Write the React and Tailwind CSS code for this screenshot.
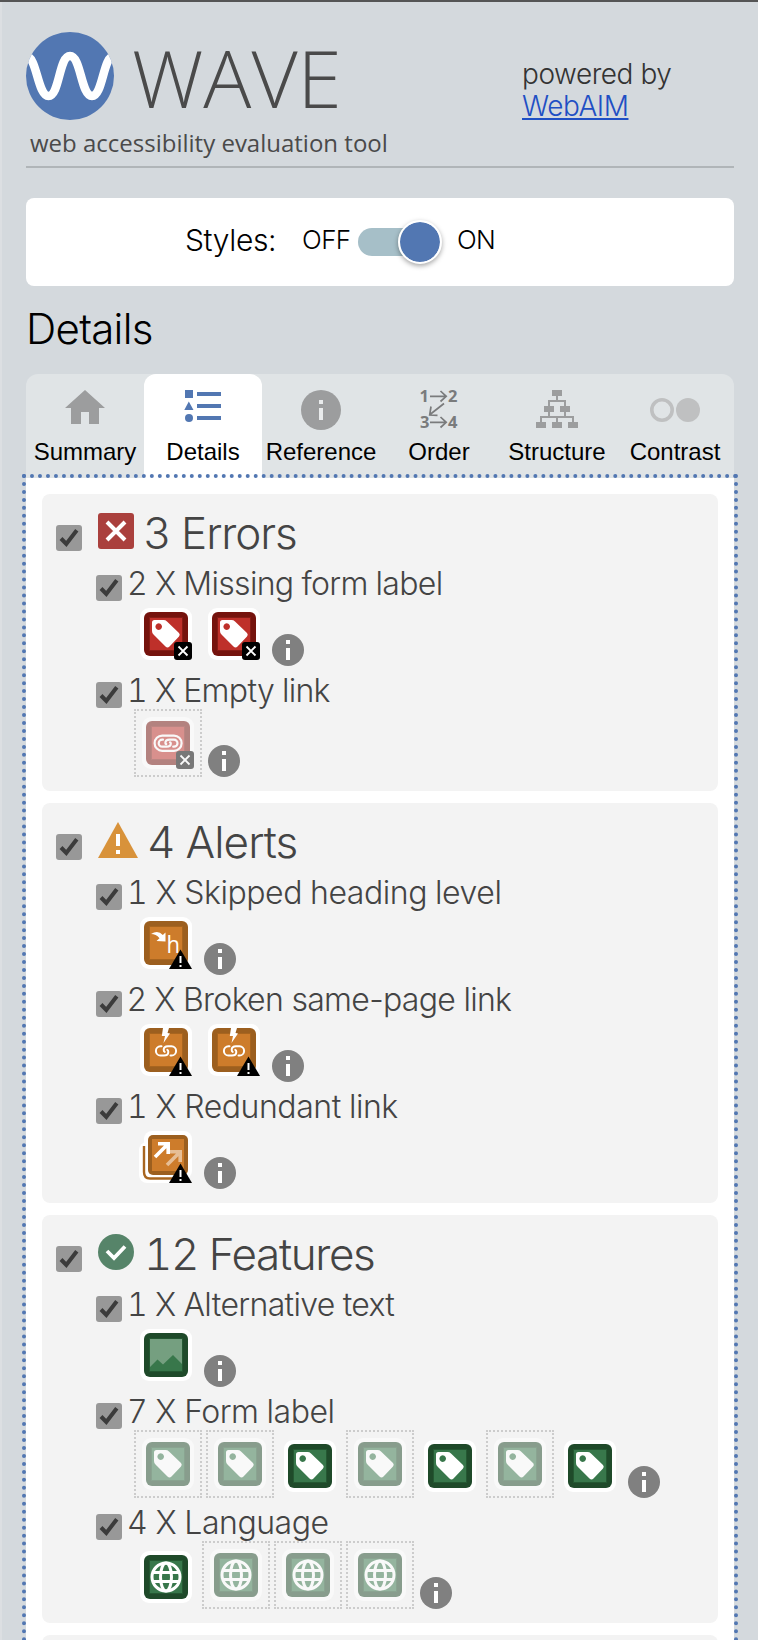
const light = "font-['Inter','Liberation_Sans',sans-serif] font-light";

function Logo() {
  return (
    <svg className="h-[88px] w-[88px] shrink-0" viewBox="0 0 88 88">
      <defs>
        <clipPath id="disc"><circle cx="44" cy="44" r="44" /></clipPath>
      </defs>
      <circle cx="44" cy="44" r="44" fill="#5277b2" />
      <path clipPath="url(#disc)" d="M0 24C11 24 11.500 64 22.500 64S33 24 44 24S55 64 66 64S77 24 88 24" fill="none" stroke="#fff" strokeWidth="8.500" />
    </svg>
  );
}

function HomeIcon() {
  return (
    <svg className="h-[40px] w-[40px]" viewBox="0 0 40 40" fill="#9c9d9e">
      <path d="M20 0L40 18H34V34H24V22H16V34H6V18H0Z" />
    </svg>
  );
}

function ListIcon() {
  return (
    <svg className="h-[40px] w-[40px]" viewBox="0 0 40 40" fill="#5277b2">
      <path d="M2 0h8v8h-8zM5.800 11.500L10.500 20H1.300zM14 2h24v4h-24zM14 14h24v4h-24zM14 26h24v4h-24z" />
      <circle cx="6" cy="28" r="4" />
    </svg>
  );
}

function RefIcon() {
  return (
    <svg className="h-[40px] w-[40px]" viewBox="0 0 40 40">
      <circle cx="20" cy="20" r="20" fill="#9c9d9e" />
      <path d="M18 10h4v4h-4zM18 18h4v12h-4z" fill="#e9ebec" />
    </svg>
  );
}

function OrderIcon() {
  return (
    <svg className="h-[40px] w-[40px] overflow-visible" viewBox="0 0 40 40">
      <g fill="#7a7b7c" fontFamily="Open Sans, sans-serif" fontWeight="700" fontSize="16.500">
        <text x="0.500" y="12">1</text>
        <text x="29" y="12">2</text>
        <text x="1" y="38">3</text>
        <text x="29" y="38">4</text>
      </g>
      <path d="M11 6.300H27M21.500 1L27.200 6.300L21.500 11.500M25 13.500L11 24.500M12 16.500L10.700 25L18.500 25.300M11 32.300H27M21.500 27L27.200 32.300L21.500 37.500" fill="none" stroke="#7a7b7c" strokeWidth="1.700" />
    </svg>
  );
}

function StructureIcon() {
  return (
    <svg className="h-[40px] w-[42px]" viewBox="0 0 42 40" fill="#9c9d9e">
      <path d="M16 0h10v6H16zM8 16h10v6H8zM24 16h10v6H24zM0 32h10v6H0zM16 32h10v6H16zM32 32h10v6H32z" />
      <path d="M21 6V11M13 16V11H29V16M13 22V27M29 22V27M5 32V27H37V32M21 27V32" fill="none" stroke="#9c9d9e" strokeWidth="2" />
    </svg>
  );
}

function ContrastIcon() {
  return (
    <svg className="h-[40px] w-[50px]" viewBox="0 0 50 40">
      <circle cx="12" cy="20" r="10.200" fill="none" stroke="#bfc0c1" strokeWidth="3.600" />
      <circle cx="38" cy="20" r="12" fill="#bfc0c1" />
    </svg>
  );
}

const tabs = [
  ['Summary', HomeIcon],
  ['Details', ListIcon],
  ['Reference', RefIcon],
  ['Order', OrderIcon],
  ['Structure', StructureIcon],
  ['Contrast', ContrastIcon],
];

function Checkbox({ className }) {
  return (
    <svg className={'h-[26px] w-[26px] shrink-0 ' + className} viewBox="0 0 26 26">
      <rect width="26" height="26" rx="3" fill="#989898" />
      <path d="M5 13.500L10.300 19L20.800 5.200" fill="none" stroke="#3b3b3b" strokeWidth="4" />
    </svg>
  );
}

function InfoIcon() {
  return (
    <svg className="ml-0.5 h-8 w-8 shrink-0" viewBox="0 0 32 32">
      <circle cx="16" cy="16" r="16" fill="#808080" />
      <path d="M14 6h4v4h-4zM14 14h4v12h-4z" fill="#fff" />
    </svg>
  );
}

const palettes = {
  red: ['#75130d', '#851c15', '#be302a'],
  orange: ['#9c5f1f', '#a8651f', '#cd7c2b'],
  green: ['#1f4a2a', '#245832', '#38774b'],
};

function Frame({ tone }) {
  const [edge, mid, fill] = palettes[tone];
  return (
    <g>
      <rect width="52" height="52" rx="9" fill="#fff" />
      <rect x="4" y="4" width="44" height="44" rx="6" fill={edge} />
      <rect x="9" y="9" width="34" height="34" fill={mid} />
      <rect x="10" y="10" width="32" height="32" fill={fill} />
    </g>
  );
}

function Tag() {
  return (
    <path fillRule="evenodd" fill="#fff" d="M14.500 12H23.500Q25.500 12 27 13.400L39 25Q40.500 26.500 39 28.500L29.500 38.500Q27.500 40.300 25.500 38.500L13.500 26.500Q12 25 12 23V14.500Q12 12 14.500 12ZM18.700 15.300A3.300 3.300 0 1 0 18.710 15.300Z" />
  );
}

function ErrorBadge() {
  return (
    <g>
      <rect x="34" y="34" width="18" height="18" rx="3" fill="#000" />
      <path d="M38.500 38.500L47.500 47.500M47.500 38.500L38.500 47.500" stroke="#fff" strokeWidth="1.800" />
    </g>
  );
}

function AlertBadge() {
  return (
    <g>
      <path d="M40.500 32.500L52 52H29Z" fill="#000" />
      <path d="M39.500 39h2v7h-2zM39.500 48h2v2h-2z" fill="#fff" />
    </g>
  );
}

function Glyph({ kind }) {
  switch (kind) {
    case 'missing':
      return <g><Frame tone="red" /><Tag /><ErrorBadge /></g>;
    case 'emptylink':
      return (
        <g>
          <Frame tone="red" />
          <g fill="none" stroke="#fff" strokeWidth="2.200" strokeLinecap="round">
            <rect x="12.600" y="18.600" width="27" height="15.200" rx="7.600" />
            <path d="M21 22.700H20.200A3.500 3.500 0 0 0 20.200 29.700H24.500Q28.800 29.700 28.800 26.500Q28.800 25.600 28 25.300" />
            <path transform="rotate(180 26.100 26.200)" d="M21 22.700H20.200A3.500 3.500 0 0 0 20.200 29.700H24.500Q28.800 29.700 28.800 26.500Q28.800 25.600 28 25.300" />
          </g>
          <ErrorBadge />
        </g>
      );
    case 'skipped':
      return (
        <g>
          <Frame tone="orange" />
          <path d="M11 17Q18 12.500 22.800 18L25.500 15.500L25.500 24.500L16.500 24L19.500 21.200Q16 17 11 17Z" fill="#fff" />
          <text x="26.500" y="35.500" fill="#fff" fontFamily="Open Sans, sans-serif" fontSize="24" textLength="13.500" lengthAdjust="spacingAndGlyphs">h</text>
          <AlertBadge />
        </g>
      );
    case 'broken':
      return (
        <g>
          <Frame tone="orange" />
          <path d="M23 4H29L27.500 9L30 9.500L23.500 19L25 12H21.800Z" fill="#fff" />
          <g fill="none" stroke="#fff" strokeWidth="2" strokeLinecap="round">
            <path d="M21.500 22.300H20.500A4.600 4.600 0 0 0 20.500 31.500H24Q28.300 31.500 28.300 28Q28.300 26.300 27.300 25.900" />
            <path transform="rotate(180 26 26.900)" d="M21.500 22.300H20.500A4.600 4.600 0 0 0 20.500 31.500H24Q28.300 31.500 28.300 28Q28.300 26.300 27.300 25.900" />
          </g>
          <AlertBadge />
        </g>
      );
    case 'redundant':
      return (
        <g>
          <rect x="4" y="0" width="48" height="48" rx="8" fill="#fff" />
          <rect x="-1" y="11" width="48" height="41" rx="8" fill="#fff" />
          <path d="M4 15V41Q4 47.500 10 47.500H38" fill="none" stroke="#a8651f" strokeWidth="2.400" />
          <rect x="8" y="4" width="40" height="40" rx="5" fill="#9c5f1f" />
          <rect x="12" y="8" width="32" height="32" fill="#cd7c2b" />
          <g fill="none" stroke="#fff" strokeWidth="3.600">
            <path d="M15 26L28 13M18 12.800H28.200V23" />
            <path opacity="0.500" d="M27 34L40 21M30 20.800H40.200V31" />
          </g>
          <AlertBadge />
        </g>
      );
    case 'alt':
      return (
        <g>
          <Frame tone="green" />
          <rect x="10" y="10" width="32" height="32" fill="#759f80" />
          <path d="M10 42V38L17.500 30.500L23 35.500L33 26L42 35V42Z" fill="#38774b" />
        </g>
      );
    case 'label':
      return <g><Frame tone="green" /><Tag /></g>;
    default:
      return (
        <g>
          <Frame tone="green" />
          <g fill="none" stroke="#fff" strokeWidth="3">
            <circle cx="26" cy="26" r="14" />
            <ellipse cx="26" cy="26" rx="5.500" ry="14" />
            <path d="M13 21.500H39M13 30.500H39" />
          </g>
        </g>
      );
  }
}

function Tile({ kind, hidden }) {
  const art = (
    <svg className={'block h-[52px] w-[52px] overflow-visible ' + (hidden ? 'opacity-50' : '')} viewBox="0 0 52 52">
      <Glyph kind={kind} />
    </svg>
  );
  if (hidden) return <div className="h-[68px] w-[68px] shrink-0 border-2 border-dotted border-[#cccccc] p-1.5">{art}</div>;
  return <div className="m-1.5 shrink-0">{art}</div>;
}

const groups = [
  {
    title: '3 Errors',
    icon: (
      <svg className="h-9 w-9 shrink-0" viewBox="0 0 36 36">
        <rect width="36" height="36" rx="3" fill="#aa403d" />
        <path d="M9 9L27 27M27 9L9 27" stroke="#fff" strokeWidth="4" />
      </svg>
    ),
    titleClass: 'ml-[9px] tracking-[-1.1px] tabular-nums',
    items: [
      ['2 X Missing form label', 'tracking-[-0.68px] tabular-nums', 'missing', [0, 0]],
      ['1 X Empty link', 'tracking-[-0.7px] tabular-nums', 'emptylink', [1]],
    ],
  },
  {
    title: '4 Alerts',
    icon: (
      <svg className="h-9 w-10 shrink-0" viewBox="0 0 40 36">
        <path d="M20 0L40 36H0Z" fill="#d8923a" />
        <path d="M18 12h4v12h-4zM18 28h4v4h-4z" fill="#fff" />
      </svg>
    ),
    titleClass: 'ml-[9px] tracking-[-0.9px] tabular-nums',
    items: [
      ['1 X Skipped heading level', 'tracking-[-0.46px] tabular-nums', 'skipped', [0]],
      ['2 X Broken same-page link', 'tracking-[-0.7px]', 'broken', [0, 0]],
      ['1 X Redundant link', 'tracking-[-0.45px] tabular-nums', 'redundant', [0]],
    ],
  },
  {
    title: '12 Features',
    icon: (
      <svg className="h-9 w-9 shrink-0" viewBox="0 0 36 36">
        <circle cx="18" cy="18" r="18" fill="#568469" />
        <path d="M9 17L16 24L27 12.500" fill="none" stroke="#fff" strokeWidth="3.800" />
      </svg>
    ),
    titleClass: 'ml-[10px] tracking-[-1.35px] tabular-nums',
    items: [
      ['1 X Alternative text', 'tracking-[-0.65px] tabular-nums', 'alt', [0]],
      ['7 X Form label', 'tracking-[-0.48px] tabular-nums', 'label', [1, 1, 0, 1, 0, 1, 0]],
      ['4 X Language', 'tracking-[-0.45px] tabular-nums', 'language', [0, 1, 1, 1]],
    ],
  },
];

function Group({ group }) {
  return (
    <section className="rounded-lg bg-[#f3f3f3] pb-3 text-[#444444]">
      <div className="flex h-[67px] pl-3.5">
        <Checkbox className="mt-[31px]" />
        <div className="mt-[19px] ml-4">{group.icon}</div>
        <h2 className={`${light} text-[44px] leading-[78px] whitespace-nowrap ${group.titleClass}`}>{group.title}</h2>
      </div>
      {group.items.map(([label, spacing, kind, tiles]) => (
        <div key={label} className="pb-0.5">
          <div className="flex h-[41px] pl-[54px]">
            <Checkbox className="mt-3.5" />
            <span className={`${light} ml-[5px] text-[32px] leading-[46px] whitespace-nowrap ${spacing}`}>{label}</span>
          </div>
          <div className="flex items-end gap-1 pl-[92px]">
            {tiles.map((h, i) => (
              <Tile key={i} kind={kind} hidden={h === 1} />
            ))}
            <InfoIcon />
          </div>
        </div>
      ))}
    </section>
  );
}

export default function App() {
  return (
    <div className="h-[1640px] w-[758px] overflow-hidden border-t-2 border-t-[#555555] bg-[#d4d9dd] shadow-[inset_2px_0_0_#dcdfe2]">
      <header className="mr-6 ml-[26px] flex h-[166px] justify-between border-b-2 border-[#b0b5b8] pt-[30px] text-[#4a4a4a]">
        <div>
          <div className="flex h-[88px]">
            <Logo />
            <h1 className="ml-[18px] font-['Open_Sans',sans-serif] text-[80px] leading-[90px] font-light">WAVE</h1>
          </div>
          <p className="ml-1 font-['Open_Sans',sans-serif] text-[24px] leading-[46px] whitespace-nowrap">web accessibility evaluation tool</p>
        </div>
        <div className={`${light} mt-[26px] w-[212px] text-[28px] leading-8 tracking-[-0.45px] text-[#333333]`}>
          powered by
          <br />
          <a className="text-[#1f4fc4] underline decoration-2 underline-offset-2">WebAIM</a>
        </div>
      </header>

      <div className="mt-[30px] mr-6 ml-[26px] flex h-[88px] rounded-lg bg-white text-black">
        <span className={`${light} ml-[159px] w-[117px] text-[30px] leading-[85px] tracking-[-0.35px]`}>Styles:</span>
        <span className={`${light} w-[56px] text-[26px] leading-[84px] tracking-[-0.6px]`}>OFF</span>
        <div className="relative mt-[30px] h-7 w-[70px] rounded-l-full bg-[#a6bfc8]">
          <div className="absolute top-[-8px] left-[40px] h-11 w-11 rounded-full border-2 border-white bg-[#5277b2] bg-clip-padding shadow-[0_2px_5px_rgba(0,0,0,0.35)]" />
        </div>
        <span className={`${light} ml-[29px] text-[26px] leading-[84px] tracking-[-0.8px]`}>ON</span>
      </div>

      <h2 className={`${light} ml-[26px] h-[88px] text-[42px] leading-[86px] tracking-[-0.7px] text-black`}>Details</h2>

      <nav className="mr-6 ml-[26px] grid h-[104px] grid-cols-6 rounded-t-xl bg-[#e0e4e6] pt-4">
        {tabs.map(([name, Icon]) => (
          <div key={name} className={'-mt-4 flex flex-col items-center pt-4 ' + (name === 'Details' ? 'rounded-t-xl bg-white' : '')}>
            <Icon />
            <span className="mt-1.5 font-['Liberation_Sans',sans-serif] text-[24px] leading-8 text-black">{name}</span>
          </div>
        ))}
      </nav>

      <main className="relative -mt-1 mr-5 ml-[22px] flex h-[1400px] flex-col gap-3 border-4 border-dotted border-[#5277b2] bg-white bg-clip-padding p-4">
        {groups.map((g) => (
          <Group key={g.title} group={g} />
        ))}
        <section className="h-72 rounded-lg bg-[#f3f3f3]" />
      </main>
    </div>
  );
}
